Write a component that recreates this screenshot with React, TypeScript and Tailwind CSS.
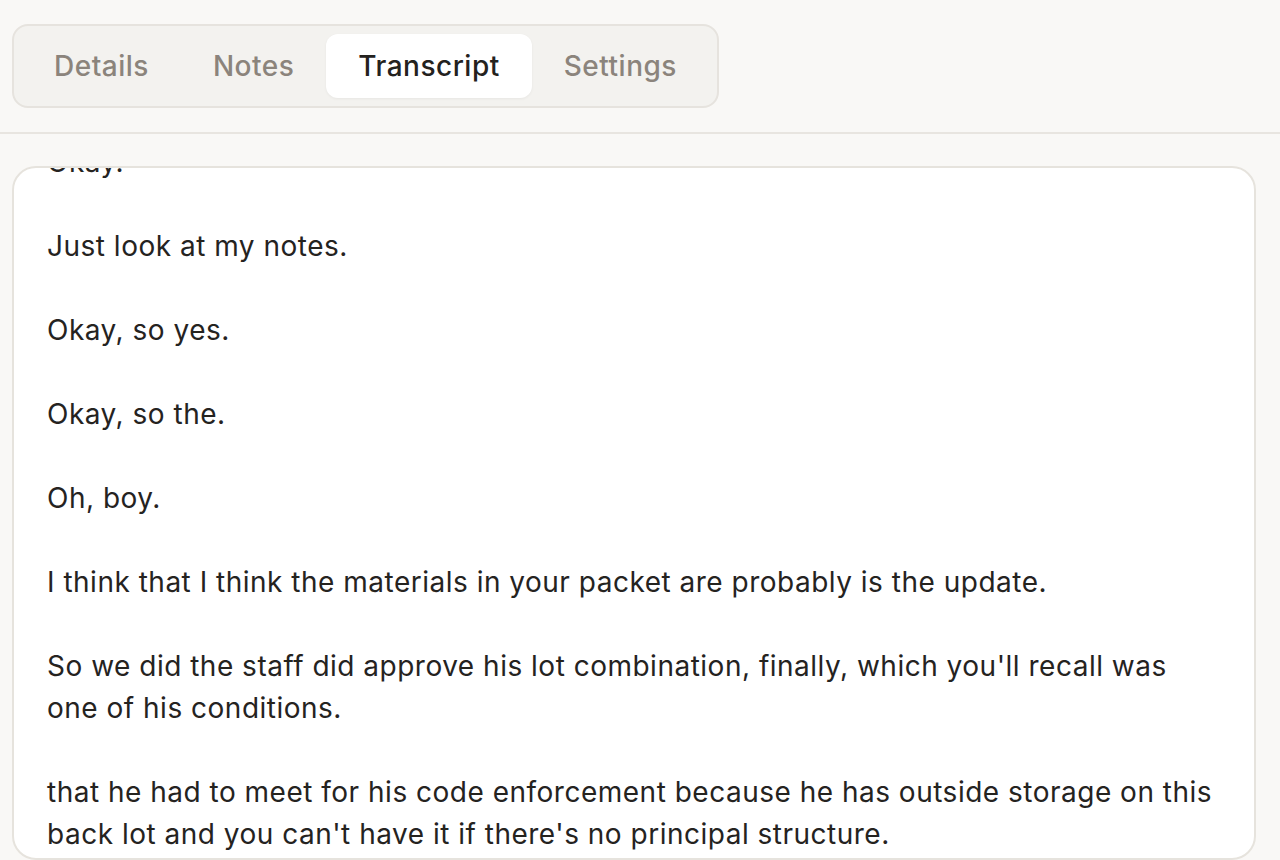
import { useEffect, useRef, useState } from "react";

const tabs = ["Details", "Notes", "Transcript", "Settings"];

const paragraphs = [
  "Okay.",
  "Just look at my notes.",
  "Okay, so yes.",
  "Okay, so the.",
  "Oh, boy.",
  "I think that I think the materials in your packet are probably is the update.",
  "So we did the staff did approve his lot combination, finally, which you'll recall was one of his conditions.",
  "that he had to meet for his code enforcement because he has outside storage on this back lot and you can't have it if there's no principal structure.",
  "So that's where that stands right now.",
  "Okay.",
];

export default function App() {
  const [active, setActive] = useState("Transcript");
  const scrollRef = useRef<HTMLDivElement>(null);

  useEffect(() => {
    // transcript is scrolled a little past the first line
    if (scrollRef.current) scrollRef.current.scrollTop = 59;
  }, []);

  return (
    <div
      className="h-[860px] flex flex-col bg-[#f9f8f6] text-[#25231f] overflow-hidden tracking-[0.5px]"
      style={{ fontFamily: "Inter, 'Noto Sans', sans-serif" }}
    >
      <div className="shrink-0 px-[12px] pt-[24px] pb-[24px] border-b-2 border-[#e8e5e0]">
        <div className="inline-flex p-[8px] rounded-[16px] border-2 border-[#e6e3de] bg-[#f3f2ef]">
          {tabs.map((tab) => (
            <button
              key={tab}
              type="button"
              onClick={() => setActive(tab)}
              className={
                tab === active
                  ? "h-[64px] px-[32px] rounded-[12px] bg-white text-[28px] font-medium tracking-[0.5px] text-[#24221e] shadow-[0_1px_3px_rgba(0,0,0,0.05)]"
                  : "h-[64px] px-[32px] rounded-[12px] text-[28px] font-medium tracking-[0.5px] text-[#8b847c]"
              }
            >
              {tab}
            </button>
          ))}
        </div>
      </div>

      <div className="flex-1 min-h-0 pt-[32px] pl-[12px] pr-[24px]">
        <div
          ref={scrollRef}
          className="h-full overflow-hidden bg-white border-2 border-[#e6e3dd] rounded-[24px]"
        >
          <div className="px-[33px] py-[32px] flex flex-col gap-[42px] text-[28px] leading-[42px]">
            {paragraphs.map((p, i) => (
              <p key={i}>{p}</p>
            ))}
          </div>
        </div>
      </div>
    </div>
  );
}
